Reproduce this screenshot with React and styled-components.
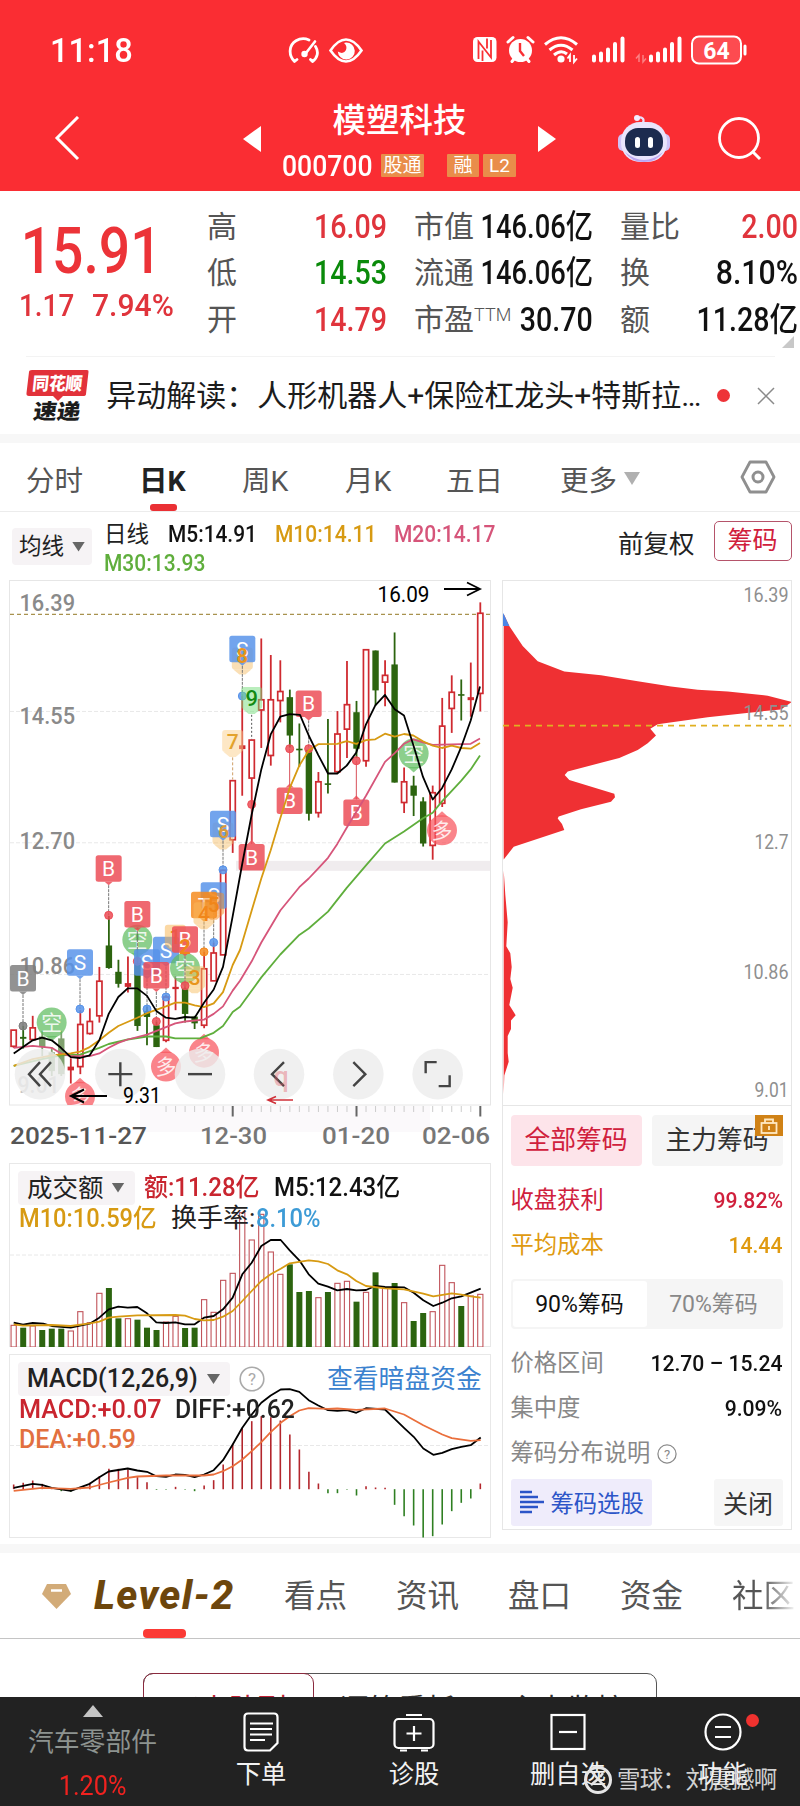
import React from "react";
import styled, {createGlobalStyle} from "styled-components";

const RED = "#c9252f";
const GREEN = "#2c640f";
const ORANGE = "#d79a12";
const PINK = "#d6557a";
const LIME = "#5fae3c";

/* ---------- chart data: [up, top, bottom, high, low] ---------- */

const candles = [
    [1, 1223, 1266, 1223, 1270], [0, 1241, 1246, 1212, 1272], [1, 1217, 1248, 1185, 1252],
    [0, 1240, 1268, 1225, 1292, 1], [0, 1282, 1332, 1270, 1345, 1], [0, 1245, 1340, 1225, 1345, 1],
    [1, 1320, 1330, 1298, 1365], [1, 1208, 1320, 1170, 1340], [1, 1200, 1232, 1165, 1235],
    [1, 1093, 1185, 1055, 1203], [0, 998, 1058, 920, 1060], [0, 1068, 1100, 1036, 1110],
    [1, 1098, 1108, 1027, 1123], [0, 1045, 1212, 950, 1225], [0, 1172, 1188, 1160, 1263],
    [0, 1210, 1268, 1200, 1268], [1, 1135, 1250, 1130, 1255], [1, 1108, 1114, 1080, 1170],
    [0, 1112, 1180, 1105, 1203], [0, 1187, 1205, 1185, 1220], [1, 1060, 1210, 1015, 1218],
    [1, 1018, 1092, 990, 1092], [1, 798, 1023, 798, 1023], [1, 560, 717, 560, 752],
    [1, 466, 476, 335, 600], [1, 452, 553, 452, 720], [1, 345, 372, 182, 473],
    [1, 345, 493, 226, 520], [1, 323, 347, 240, 405], [0, 338, 440, 318, 472],
    [0, 475, 478, 408, 523], [0, 478, 648, 478, 666], [1, 563, 645, 537, 658],
    [0, 567, 571, 396, 594], [1, 436, 536, 375, 540], [1, 358, 423, 242, 500],
    [0, 378, 475, 348, 500], [1, 212, 507, 212, 523], [0, 214, 320, 214, 360],
    [1, 280, 298, 240, 362], [0, 251, 565, 166, 565], [1, 563, 618, 525, 646],
    [0, 573, 600, 547, 654], [0, 615, 727, 604, 735], [1, 592, 732, 573, 770],
    [1, 415, 620, 340, 630], [1, 325, 368, 280, 433], [0, 330, 334, 291, 400],
    [1, 338, 346, 246, 390], [1, 115, 328, 86, 376]
];

const ma5 = "41,1285 98,1250 126,1243 155,1250 183,1270 212,1295 240,1297 269,1290 298,1250 326,1180 355,1135 383,1112 412,1112 441,1132 469,1172 498,1190 526,1193 555,1188 584,1190 612,1150 641,1115 669,1055 698,920 727,780 755,650 784,530 812,437 841,390 869,383 900,385 926,440 955,492 984,541 1012,541 1040,520 1069,485 1098,410 1126,360 1155,332 1184,370 1212,387 1240,465 1269,550 1298,610 1326,580 1355,530 1384,470 1412,400 1440,310";
const ma10 = "41,1318 98,1300 155,1290 212,1285 240,1280 269,1268 298,1250 326,1230 355,1212 412,1190 441,1178 498,1160 526,1150 555,1150 584,1157 612,1162 641,1152 669,1122 698,1050 720,1010 755,905 784,820 812,745 841,660 869,580 898,520 926,480 955,463 1012,462 1040,455 1069,462 1098,452 1126,450 1155,435 1184,443 1212,436 1240,440 1269,455 1298,467 1326,473 1355,467 1384,473 1412,475 1440,460";
const ma20 = "41,1270 98,1265 155,1270 183,1285 212,1292 269,1292 298,1285 326,1270 355,1257 383,1248 441,1235 498,1215 526,1205 555,1200 612,1195 641,1180 669,1160 698,1118 720,1092 755,1040 784,990 841,905 898,843 926,820 955,793 984,765 1012,728 1040,685 1098,600 1155,510 1184,487 1212,462 1240,450 1269,458 1298,465 1384,463 1412,462 1440,448";
const ma30 = "41,1318 126,1300 183,1290 240,1288 298,1270 326,1260 383,1248 441,1240 498,1240 526,1245 600,1245 641,1230 669,1212 698,1175 720,1161 784,1083 841,1022 898,970 926,953 984,908 1040,845 1098,785 1155,727 1212,695 1269,660 1298,645 1326,615 1384,560 1412,530 1440,493";

const volumes = [
    [1, 523], [0, 530], [1, 525], [0, 537], [0, 533], [0, 533], [1, 540], [1, 482], [1, 515], [1, 427],
    [0, 411], [0, 502], [1, 503], [0, 506], [0, 530], [0, 537], [1, 513], [1, 496], [0, 531], [0, 530],
    [1, 446], [1, 484], [1, 388], [1, 367], [1, 185], [1, 267], [1, 190], [1, 303], [1, 370], [0, 340],
    [0, 423], [0, 420], [1, 440], [0, 423], [1, 397], [1, 391], [0, 452], [1, 424], [0, 364], [1, 412],
    [0, 396], [1, 455], [0, 510], [0, 486], [1, 482], [1, 343], [1, 395], [0, 465], [1, 435], [1, 430]
];
const vol5 = "41,515 69,521 98,516 130,518 155,525 212,530 269,518 298,500 326,475 355,467 383,470 412,468 441,487 469,514 498,516 526,514 555,520 584,520 612,500 641,495 669,475 698,440 727,370 755,335 784,285 812,267 842,267 869,298 898,328 926,370 955,398 984,407 1012,418 1041,414 1069,418 1098,417 1126,405 1155,408 1212,409 1241,425 1270,448 1300,465 1327,455 1355,442 1384,436 1412,425 1442,413";
const vol10 = "41,520 69,524 155,522 212,525 269,517 298,512 326,500 355,497 412,493 526,492 555,494 584,504 612,508 641,507 669,497 698,480 727,450 755,420 784,390 812,370 842,353 869,337 926,328 955,331 984,339 1012,358 1041,370 1069,390 1098,405 1155,412 1212,415 1270,428 1300,436 1355,427 1384,431 1412,436 1442,440";

const macdBars = [
    1005, 1000, 993, 1003, 1014, 1025, 1027, 1012, 1000, 980, 958, 958, 960, 983, 998, 1021, 1021, 1012, 1021, 1025,
    1008, 992, 945, 883, 835, 815, 800, 803, 813, 855, 900, 967, 1002, 1031, 1031, 1021, 1038, 1010, 1014, 1015,
    1066, 1100, 1128, 1164, 1160, 1125, 1085, 1060, 1047, 1002
];
const diffLine = "41,1015 98,1003 126,1006 155,1015 212,1024 269,1003 298,983 326,966 383,957 412,963 441,967 469,980 498,982 526,975 555,976 584,983 612,975 641,962 669,932 698,885 727,835 755,795 784,760 812,738 842,720 869,719 898,727 926,752 955,768 984,782 1012,784 1041,782 1069,790 1098,776 1155,780 1184,808 1212,835 1241,862 1270,897 1300,916 1327,910 1355,899 1384,892 1412,887 1442,864";
const deaLine = "41,1024 126,1015 212,1018 269,1014 326,999 383,985 412,981 498,978 612,978 641,975 669,965 698,950 727,930 755,905 784,878 812,848 842,820 869,800 898,783 926,776 984,778 1012,777 1069,781 1155,777 1212,795 1270,827 1327,855 1355,866 1412,874 1442,872";

const chipShape = "38,125 55,160 95,218 140,262 220,292 330,303 440,320 540,335 620,345 710,350 830,362 902,380 870,402 760,413 650,425 500,445 478,458 495,478 470,500 440,520 385,543 230,582 221,592 235,607 370,647 372,657 360,670 270,692 203,713 200,719 213,735 220,752 68,801 38,838 38,870 43,940 50,1020 46,1090 58,1110 62,1150 58,1185 65,1210 55,1260 74,1290 60,1305 60,1330 50,1350 50,1400 53,1425 40,1465 38,1520";

const quotes = [
    ["高", "16.09", "#e0343c"], ["市值", "146.06亿", "#111"], ["量比", "2.00", "#e0343c"],
    ["低", "14.53", "#0a8a0a"], ["流通", "146.06亿", "#111"], ["换", "8.10%", "#111"],
    ["开", "14.79", "#e0343c"], ["市盈", "30.70", "#111", "TTM"], ["额", "11.28亿", "#111"]
];

/* ---------- chart helpers ---------- */

const K = 2.658;
const kx = v => v / 3;
const ky = v => v / K;
const barX = i => (41 + 28.57 * i) / 3;
const scale = (str, fx, fy) => str
    .split(" ")
    .map(p => {
        const [x, y] = p.split(",");
        return fx(+x).toFixed(1) + "," + fy(+y).toFixed(1);
    })
    .join(" ");

const Curve = ({points, color, y = ky, w = 1.8}) => (
    <polyline points={scale(points, kx, y)} fill="none" stroke={color} strokeWidth={w} strokeLinejoin="round"/>
);

const Label = ({x, y, w, size = 24, color = "#8a8a8a", anchor = "start", weight = 400, children}) => (
    <text x={x} y={y} fontSize={size} fill={color} textAnchor={anchor} fontWeight={weight} textLength={w} lengthAdjust="spacingAndGlyphs">{children}</text>
);

// square B / S / T flag, tail points to the candle it belongs to
const Flag = ({x, y, color, text, up, dot}) => {
    const cx = kx(x);
    const top = ky(y);
    const mid = top + 13.5;
    return (
        <g>
            {dot && <line x1={cx} x2={cx} y1={up ? top : top + 30} y2={ky(dot)} stroke={up ? "#d8505a" : "#777"} strokeWidth="1" strokeDasharray={up ? "" : "3 1"}/>}
            {dot && <circle cx={cx} cy={ky(dot)} r="4" fill={color} fillOpacity=".85" stroke={color}/>}
            <rect x={cx - 13} y={top} width="26" height="26.5" rx="2.5" fill={color} fillOpacity=".84"/>
            <path d={up ? `M${cx - 4} ${top}L${cx} ${top - 4}L${cx + 4} ${top}Z` : `M${cx - 4} ${top + 26.5}L${cx} ${top + 30}L${cx + 4} ${top + 26.5}Z`} fill={color} fillOpacity=".84"/>
            <text x={cx} y={mid + 7.5} fontSize="21" fill="#fff" textAnchor="middle">{text}</text>
        </g>
    );
};

const Bubble = ({x, y, color, text, up}) => {
    const cx = kx(x);
    const cy = ky(y);
    const d = up ? -1 : 1;
    return (
        <g>
            <circle cx={cx} cy={cy} r="15" fill={color} fillOpacity=".72"/>
            <path d={`M${cx - 6} ${cy + d * 13.5}L${cx} ${cy + d * 19}L${cx + 6} ${cy + d * 13.5}Z`} fill={color} fillOpacity=".72"/>
            <text x={cx} y={cy + 7.5} fontSize="21" fill="#fff" fillOpacity=".85" textAnchor="middle">{text}</text>
        </g>
    );
};

const Count = ({x, y, text, bg, color, size = 21}) => (
    <g>
        <rect x={kx(x) - 10.5} y={ky(y) - 12} width="21" height="22" rx="3" fill={bg} fillOpacity=".5"/>
        <path d={`M${kx(x) - 9} ${ky(y) + 10}h18l-6 5h-6z`} fill={bg} fillOpacity=".5"/>
        <text x={kx(x)} y={ky(y) + 7} fontSize={size} fontWeight="500" fill={color} textAnchor="middle">{text}</text>
    </g>
);

const RoundButton = ({x, d}) => (
    <g>
        <circle cx={kx(x)} cy={ky(1340)} r="25.3" fill="#ededed" fillOpacity=".82"/>
        <path transform={`translate(${kx(x)} ${ky(1340)})`} d={d} fill="none" stroke="#444" strokeWidth="2.4"/>
    </g>
);

const BLUE = "#5793ea";
const ROSE = "#ec4b55";
const LEAF = "#5fbd5f";

const KChart = () => (
    <Drawing width="482" height="575" viewBox="9 10 482 575">
        <defs>
            <clipPath id="kbox"><rect x="9" y="10" width="482" height="525"/></clipPath>
        </defs>
        <rect x="140" y="536" width="290" height="26" fill="#fbf9fb"/>
        <rect x="9.5" y="10.5" width="481" height="524.5" fill="none" stroke="#e6e6e6"/>
        {[376, 725, 1075].map(y => (
            <line key={y} x1="10" x2="490" y1={ky(y)} y2={ky(y)} stroke="#e8e8e8" strokeDasharray="4 2"/>
        ))}
        <rect x="236" y={ky(773)} width="254" height="10" fill="#f0ecee"/>
        <line x1="10" x2="490" y1={ky(118)} y2={ky(118)} stroke="#a8924e" strokeWidth="1.2" strokeDasharray="4 3"/>

        <Label x="19.5" y="40.5" w="55.5" weight={500}>16.39</Label>
        <Label x="19.5" y="153.5" w="55.5" weight={500}>14.55</Label>
        <Label x="19.5" y="278.5" w="55.5" weight={500}>12.70</Label>
        <Label x="19.5" y="403.5" w="55.5" weight={500}>10.86</Label>
        <Label x="17.5" y="523" w="42" color="#c2c2c2" weight={500}>9.01</Label>

        <g clipPath="url(#kbox)">
            {candles.map(([up, top, bottom, high, low, faded], i) => {
                const x = barX(i);
                const c = up ? "#cf2a30" : GREEN;
                const h = Math.max(ky(bottom - top), 1.6);
                const solid = !up || h < 4.5;
                return (
                    <g key={i} opacity={faded ? 0.6 : 1}>
                        <line x1={x} x2={x} y1={ky(high)} y2={ky(low)} stroke={c} strokeWidth="1.8"/>
                        <rect x={x - (solid ? 3.2 : 2.6)} y={ky(top)} width={solid ? 6.4 : 5.2} height={h} fill={solid ? c : "#fff"} stroke={solid ? "none" : c} strokeWidth="1.7"/>
                    </g>
                );
            })}

            <Flag x={69} y={1050} color="#7d7d7d" text="B" dot={1212}/>
            <Bubble x={155} y={1203} color={LEAF} text="空"/>
            <Flag x={240} y={1008} color={BLUE} text="S" dot={1167}/>
            <Flag x={326} y={758} color={ROSE} text="B" dot={918}/>
            <Bubble x={412} y={983} color={LEAF} text="空"/>
            <Flag x={412} y={880} color={ROSE} text="B" dot={1040}/>
            <Flag x={441} y={1008} color={BLUE} text="S" dot={1167}/>
            <Flag x={498} y={975} color={BLUE} text="S" dot={1135}/>
            <Flag x={469} y={1042} color={ROSE} text="B" dot={1200}/>
            <Bubble x={555} y={1058} color={LEAF} text="空"/>
            <Count x={584} y={1085} text="3" bg="#f7c063" color="#e8951c"/>
            <Count x={526} y={975} text="1" bg="#f7b14a" color="#e8951c"/>
            <Flag x={555} y={947} color={ROSE} text="B" dot={1105}/>
            <Label x={kx(555)} y={ky(1020)} anchor="middle" size={21} color="#f0861a" weight={700}>2</Label>
            <Flag x={641} y={830} color={BLUE} text="S" dot={990}/>
            <Flag x={612} y={855} color="#f58a1d" text="T" dot={1015}/>
            <Count x={612} y={915} text="4" bg="#f9b95c" color="#f0861a"/>
            <Count x={641} y={890} text="5" bg="#f58a1d" color="#f0861a"/>
            <Count x={669} y={703} text="" bg="#f6bf6b" color="#e8951c"/>
            <Flag x={669} y={640} color={BLUE} text="S" dot={797}/>
            <Label x={kx(671)} y={ky(712)} anchor="middle" size={19} color="#d99a3c" weight={700}>6</Label>
            <line x1={kx(698)} x2={kx(698)} y1={ky(498)} y2={ky(557)} stroke="#cf9f66" strokeDasharray="3 2"/>
            <Count x={698} y={457} text="7" bg="#fbd08c" color="#e3a22b"/>
            <Count x={727} y={238} text="" bg="#f6bf6b" color="#e8951c"/>
            <Flag x={727} y={175} color={BLUE} text="S" dot={335}/>
            <Label x={kx(727)} y={ky(248)} anchor="middle" size={20} color="#e8951c" weight={700}>8</Label>
            <line x1={kx(755)} x2={kx(755)} y1={ky(385)} y2={ky(450)} stroke="#555" strokeDasharray="2 2"/>
            <Count x={755} y={343} text="9" bg="#76dd7c" color="#128a12" size={22}/>
            <Flag x={755} y={728} color={ROSE} text="B" up dot={623}/>
            <Flag x={926} y={320} color={ROSE} text="B" dot={475}/>
            <Flag x={869} y={578} color={ROSE} text="B" up dot={475}/>
            <Flag x={1069} y={610} color={ROSE} text="B" up dot={507}/>
            <Bubble x={1241} y={488} color={LEAF} text="空"/>
            <Bubble x={1326} y={692} color="#f8555d" text="多" up/>
            <Bubble x={498} y={1320} color="#f8555d" text="多" up/>
            <Bubble x={612} y={1283} color="#f8555d" text="多" up/>
            <Bubble x={240} y={1400} color="#f8555d" text="多" up/>

            <Curve points={ma30} color={LIME}/>
            <Curve points={ma20} color={PINK}/>
            <Curve points={ma10} color={ORANGE}/>
            <Curve points={ma5} color="#000"/>
        </g>

        <Label x="377.5" y="32" w="52" size={22} color="#000">16.09</Label>
        <path d="M444 19H480M467 12.5L480 19L467 25.5" fill="none" stroke="#000" strokeWidth="1.8"/>

        <RoundButton x={120} d="M0 -12L-11 0L0 12M11 -12L0 0L11 12"/>
        <RoundButton x={361} d="M-12 0H12M0 -12V12"/>
        <RoundButton x={600} d="M-12 0H12"/>
        <RoundButton x={837} d="M5 -12L-7 0L5 12"/>
        <RoundButton x={1075} d="M-5 -12L7 0L-5 12"/>
        <RoundButton x={1313} d="M-12 -1V-12H-1M12 1V12H1"/>

        <Label x="273.5" y="516" size={27} color="rgba(226,90,100,.4)" weight={500}>q</Label>
        <path d="M293 530H268M276 526.5L268 530L276 533.5" fill="none" stroke="#cf3038" strokeWidth="1.6"/>
        <Label x="123" y="533" w="38" size={22} color="#000">9.31</Label>
        <path d="M107 526H71M84 519.5L71 526L84 532.5" fill="none" stroke="#000" strokeWidth="2"/>

        {Array.from({length: 34}, (_, n) => n + 16).map(i => {
            const big = i === 23 || i === 36 || i === 49;
            return <line key={i} x1={barX(i)} x2={barX(i)} y1="536" y2={big ? 546.5 : 542} stroke={big ? "#666" : "#ccc"} strokeWidth={big ? 2 : 1}/>;
        })}
        <Label x="10" y="573.5" w="137" color="#555" weight={500}>2025-11-27</Label>
        <Label x="200" y="573.5" w="67" color="#777" weight={500}>12-30</Label>
        <Label x="322" y="573.5" w="68" color="#777" weight={500}>01-20</Label>
        <Label x="422" y="573.5" w="68" color="#777" weight={500}>02-06</Label>
    </Drawing>
);

const chipY = v => v / 2.904 - 10;
const chipX = v => (v - 36) / 3;

const ChipChart = () => (
    <Drawing width="288" height="524" viewBox="0 0 288 524">
        <polygon points={scale(chipShape, chipX, chipY)} fill="#ef3033"/>
        <polygon points={scale("36,122 38,125 55,160 36,160", chipX, chipY)} fill="#4b86e6"/>
        <line x1="0" x2="288" y1={chipY(449)} y2={chipY(449)} stroke="#e0b020" strokeWidth="1.8" strokeDasharray="6 5"/>
        {[["16.39", 90, 45], ["14.55", 432, 45], ["12.7", 807, 34], ["10.86", 1185, 45], ["9.01", 1527, 34]].map(([t, y, w]) => (
            <Label key={t} x="285.5" y={chipY(y)} w={w} size={19.5} anchor="end" color="#8f8f8f">{t}</Label>
        ))}
    </Drawing>
);

const vy = v => v / 3 - 12;

const VolumeChart = () => (
    <Drawing width="482" height="184" viewBox="9 0 482 184">
        <line x1="10" x2="490" y1={vy(312)} y2={vy(312)} stroke="#e8e8e8" strokeDasharray="4 2"/>
        {volumes.map(([up, top], i) => (
            <rect
                key={i}
                x={barX(i) - (up ? 2.6 : 3)}
                y={vy(top)}
                width={up ? 5.2 : 6}
                height={vy(588) - vy(top)}
                fill={up ? "#fff" : GREEN}
                stroke={up ? "#c0535a" : "none"}
                strokeWidth="1.1"/>
        ))}
        <Curve points={vol5} color="#000" y={vy}/>
        <Curve points={vol10} color={ORANGE} y={vy}/>
    </Drawing>
);

const my = v => v / 3 - 204.5;

const MacdChart = () => (
    <Drawing width="482" height="184" viewBox="9 0 482 184">
        <line x1="10" x2="490" y1={my(888)} y2={my(888)} stroke="#e8e8e8" strokeDasharray="4 2"/>
        {macdBars.map((v, i) => (
            <line key={i} x1={barX(i)} x2={barX(i)} y1={my(1019)} y2={my(v)} stroke={v < 1019 ? "#b3262c" : "#2f7f22"} strokeWidth="1.6"/>
        ))}
        <Curve points={diffLine} color="#000" y={my}/>
        <Curve points={deaLine} color="#ea6f3c" y={my}/>
    </Drawing>
);

/* ---------- icons ---------- */

const StatusIcons = () => (
    <svg width="276" height="32" viewBox="471 34 276 32" fill="none" stroke="#fff">
        <rect x="473" y="37" width="23.5" height="25" rx="4.5" fill="#fff" stroke="none"/>
        <path d="M478.5 59V41.5L491 57.5V40M482.500 61V50.500M487 38.500V48.500" stroke="#f92f34" strokeWidth="1.800"/>
        <circle cx="520.5" cy="50.5" r="11.5" fill="#fff" stroke="none"/>
        <path d="M508 42L513 37.5M533 42L528 37.5M512 61.5L514 59M529 61.5L527 59" strokeWidth="3" strokeLinecap="round"/>
        <path d="M520 43V51L524 56" stroke="#f92f34" strokeWidth="2.4"/>
        <path d="M545 44.5Q561 31 577 44.5M549.5 50Q561 40.5 572.5 50M554 55Q561 49 567 54" strokeWidth="3"/>
        <circle cx="561" cy="59" r="3.6" fill="#fff" stroke="none"/>
        <path d="M570 62V55L567.5 58.5M574 55V62L577 58.5" strokeWidth="1.8"/>
        <path d="M594 56.5V60.5M601 53.5V60.5M608 49.5V60.5M615 44V60.5M622.5 38.5V60.5" strokeWidth="4" strokeLinecap="round"/>
        <path d="M639 62V55L636 58.5M643 55V62L646 58.5" strokeWidth="1.5" strokeOpacity=".4"/>
        <path d="M651 56.5V60.5M658 53.5V60.5M665 49.5V60.5M672 44V60.5M679.5 38.5V60.5" strokeWidth="4" strokeLinecap="round"/>
        <rect x="692" y="36.5" width="49" height="27" rx="7" strokeWidth="2" fill="#ff6a6d" fillOpacity=".5"/>
        <path d="M745 46V54" strokeWidth="3" strokeLinecap="round"/>
        <text x="716.5" y="58.5" fontSize="23" fontWeight="700" fill="#fff" stroke="none" textAnchor="middle">64</text>
    </svg>
);

const CenterIcons = () => (
    <svg width="76" height="28" viewBox="288 35 76 28" fill="none" stroke="#fff" strokeLinecap="round">
        <path d="M294.5 60.5C288 54 289 44 296 39.8C300 37.4 305 37.2 309 39M315.5 45.5C319 51 317.5 57 312.5 60.5M294.5 60.5L297 58.5M312.5 60.5L310.5 58.5" strokeWidth="2.8"/>
        <path d="M315 40.5L306 52" strokeWidth="2.6"/>
        <circle cx="304.5" cy="53" r="3.2" fill="#fff" stroke="none"/>
        <path d="M330.5 49.5Q338 38.5 346 38.5Q354 38.5 361.5 49.5Q354 60.5 346 60.5Q338 60.5 330.5 49.5Z" strokeWidth="2.6"/>
        <path d="M346 41.5A8.5 8.5 0 1 1 337.8 50.5Q343.5 54 346 49Q347.5 45 344 42Z" fill="#fff" stroke="none"/>
    </svg>
);

const Robot = () => (
    <svg width="54" height="50" viewBox="0 0 54 50">
        <path d="M26 9C28 4 24 2.5 20.500 4" fill="none" stroke="#e9defa" strokeWidth="2.200"/>
        <circle cx="20" cy="4" r="3" fill="#f3ecff"/>
        <rect x="1" y="20" width="10" height="17" rx="5" fill="#cfc2f7"/>
        <rect x="43" y="20" width="10" height="17" rx="5" fill="#cfc2f7"/>
        <rect x="4" y="8" width="46" height="40" rx="19" fill="#e9e4fc"/>
        <path d="M8 38Q27 54 46 38Q40 48 27 48Q14 48 8 38Z" fill="#bba6f2"/>
        <rect x="8" y="14" width="38" height="28" rx="13" fill="#1c2b4f"/>
        <rect x="18" y="23" width="5" height="11" rx="2.5" fill="#fff"/>
        <rect x="31" y="23" width="5" height="11" rx="2.5" fill="#fff"/>
    </svg>
);

const Help = ({size, color}) => (
    <svg width={size} height={size} viewBox="0 0 26 26">
        <circle cx="13" cy="13" r="11.8" fill="none" stroke={color} strokeWidth="1.6"/>
        <text x="13" y="19" fontSize="17" fill={color} textAnchor="middle">?</text>
    </svg>
);

/* ---------- page ---------- */

const App = () => {
    return (
        <Page>
            <GlobalStyle/>
            <Header>
                <StatusBar>
                    <Fig $size={34} $k={0.96} $w={238} $weight={500}>11:18</Fig>
                    <CenterIcons/>
                    <StatusIcons/>
                </StatusBar>
                <NavBar>
                    <NavIcon $left={54}>
                        <svg width="26" height="46" viewBox="0 0 26 46"><path d="M24 1L3 22L24 43" fill="none" stroke="#fff" strokeWidth="3"/></svg>
                    </NavIcon>
                    <NavIcon $left={163}>
                        <svg width="18" height="26" viewBox="0 0 18 26"><path d="M0 13L18 0V26Z" fill="#fff"/></svg>
                    </NavIcon>
                    <StockTitle>
                        <h1>模塑科技</h1>
                        <div>
                            <Fig $size={30} $k={0.885} $w={99} $weight={500}>000700</Fig>
                            <Tag $w={43}>股通</Tag>
                            <Tag $w={32} $left={23}>融</Tag>
                            <Tag $w={33} $left={4}>L2</Tag>
                        </div>
                    </StockTitle>
                    <NavIcon>
                        <svg width="18" height="26" viewBox="0 0 18 26"><path d="M18 13L0 0V26Z" fill="#fff"/></svg>
                    </NavIcon>
                    <NavIcon $left={61}><Robot/></NavIcon>
                    <NavIcon $left={46}>
                        <svg width="46" height="46" viewBox="0 0 46 46"><circle cx="22" cy="22" r="19.5" fill="none" stroke="#fff" strokeWidth="2.8"/><path d="M35.5 35.5L43 43" stroke="#fff" strokeWidth="3"/></svg>
                    </NavIcon>
                </NavBar>
            </Header>

            <Quote>
                <PriceBox>
                    <Price>15.91</Price>
                    <Change>
                        <Fig $size={32} $k={0.87} $w={73} $weight={500}>1.17</Fig>
                        <Fig $size={32} $k={0.94} $weight={500}>7.94%</Fig>
                    </Change>
                </PriceBox>
                <QuoteGrid>
                    {quotes.map(([name, value, color, sup]) => (
                        <QuoteCell key={name}>
                            <span>{name}{sup && <sup>{sup}</sup>}</span>
                            <QuoteValue $color={color} $k={value.length > 6 ? 0.84 : value.endsWith("%") ? 0.93 : 0.88}>{value}</QuoteValue>
                        </QuoteCell>
                    ))}
                </QuoteGrid>
                <Corner/>
            </Quote>

            <News>
                <NewsLogo>
                    <svg width="64" height="53" viewBox="0 0 64 53">
                        <path d="M6 1H61Q63 1 62.5 3L60 25Q60 27 57 27H37L32 32L27 27H3Q0 27 0.5 24L3 3Q3 1 6 1Z" fill="#e2323a"/>
                        <text x="31" y="21" fontSize="18" fontWeight="900" fill="#fff" textAnchor="middle" textLength="50" lengthAdjust="spacingAndGlyphs" transform="skewX(-6)" dx="2">同花顺</text>
                        <text x="31" y="50" fontSize="21" fontWeight="900" fill="#1c1c1c" textAnchor="middle" textLength="47" lengthAdjust="spacingAndGlyphs" transform="skewX(-8)" dx="6">速递</text>
                    </svg>
                </NewsLogo>
                <p>异动解读：<span>人形机器人+保险杠龙头+特斯拉…</span></p>
                <RedDot/>
                <svg width="18" height="18" viewBox="0 0 18 18"><path d="M1 1L17 17M17 1L1 17" stroke="#8a8a8a" strokeWidth="1.5"/></svg>
            </News>
            <Band/>

            <PeriodTabs>
                <Period>分时</Period>
                <Period $on>日K</Period>
                <Period>周K</Period>
                <Period>月K</Period>
                <Period>五日</Period>
                <Period>更多<Arrow $w={16} $h={13} $color="#b0b0b0" $left={7}/></Period>
                <svg width="36" height="34" viewBox="0 0 36 34" fill="none" stroke="#8f8f8f">
                    <path d="M10 2H26L34 17L26 32H10L2 17Z" strokeWidth="2.8" strokeLinejoin="round"/>
                    <circle cx="18" cy="17" r="5" strokeWidth="3"/>
                </svg>
            </PeriodTabs>

            <Legend>
                <SelectBox $w={80} $h={37} $size={22.5}>均线<Arrow $w={13} $h={10} $color="#666" $left={8}/></SelectBox>
                <LegendText>
                    <Fig $size={22.5} $k={1} $w={64} $color="#222">日线</Fig>
                    <Fig $size={24} $k={0.87} $w={107} $color="#111" $weight={500}>M5:14.91</Fig>
                    <Fig $size={24} $k={0.875} $w={119} $color={ORANGE} $weight={500}>M10:14.11</Fig>
                    <Fig $size={24} $k={0.875} $w={110} $color={PINK} $weight={500}>M20:14.17</Fig>
                    <Fig $size={24} $k={0.875} $w={110} $color={LIME} $weight={500}>M30:13.93</Fig>
                </LegendText>
                <Adjust>前复权</Adjust>
                <ChipButton>筹码</ChipButton>
            </Legend>

            <Charts>
                <LeftColumn>
                    <KChart/>
                    <ChartBox>
                        <VolumeChart/>
                        <ChartText>
                            <div>
                                <SelectBox $w={117} $h={35} $size={25.5}>成交额<Arrow $w={13} $h={10} $color="#666" $left={8}/></SelectBox>
                                <Fig $size={25} $k={0.96} $w={130} $color={RED} $weight={500}>额:11.28亿</Fig>
                                <Fig $size={25} $k={0.96} $color="#111" $weight={500}>M5:12.43亿</Fig>
                            </div>
                            <p>
                                <Fig $size={25} $k={0.945} $w={152} $color={ORANGE} $weight={500}>M10:10.59亿</Fig>
                                <Fig $size={26} $k={1} $w={85} $color="#222">换手率:</Fig>
                                <Fig $size={25} $k={0.95} $color="#3d9bd6" $weight={500}>8.10%</Fig>
                            </p>
                        </ChartText>
                    </ChartBox>
                    <ChartBox>
                        <MacdChart/>
                        <ChartText>
                            <div>
                                <SelectBox $w={212} $h={35} $size={25}><Fig $size={25} $k={1} $w={172} $color="#222" $weight={500}>MACD(12,26,9)</Fig><Arrow $w={13} $h={10} $color="#666" $left={8}/></SelectBox>
                                <Help size={26} color="#aaa"/>
                                <DarkLink>查看暗盘资金</DarkLink>
                            </div>
                            <p>
                                <Fig $size={25} $k={1.01} $w={156} $color={RED} $weight={500}>MACD:+0.07</Fig>
                                <Fig $size={25} $k={0.99} $color="#222" $weight={500}>DIFF:+0.62</Fig>
                            </p>
                            <p><Fig $size={25} $k={1} $color="#e2703f" $weight={500}>DEA:+0.59</Fig></p>
                        </ChartText>
                    </ChartBox>
                </LeftColumn>

                <ChipPanel>
                    <ChipChart/>
                    <ChipInfo>
                        <ChipTabs>
                            <ChipTab $on>全部筹码</ChipTab>
                            <ChipTab>
                                主力筹码
                                <Lock>
                                    <svg width="18" height="18" viewBox="0 0 18 18" fill="none" stroke="#ffe9c2" strokeWidth="1.8"><rect x="1.5" y="6" width="15" height="10"/><path d="M5 6V2.5H13V6M9 9V13"/></svg>
                                </Lock>
                            </ChipTab>
                        </ChipTabs>
                        <InfoRow $color="#d0203c"><span>收盘获利</span><b>99.82%</b></InfoRow>
                        <InfoRow $color="#e09a10"><span>平均成本</span><b>14.44</b></InfoRow>
                        <Segment>
                            <SegmentItem $on>90%筹码</SegmentItem>
                            <SegmentItem>70%筹码</SegmentItem>
                        </Segment>
                        <InfoRow $color="#111"><i>价格区间</i><b>12.70 – 15.24</b></InfoRow>
                        <InfoRow $color="#111"><i>集中度</i><b>9.09%</b></InfoRow>
                        <InfoRow><i>筹码分布说明<Help size={20} color="#8a8a8a"/></i></InfoRow>
                        <ChipActions>
                            <PickButton>
                                <svg width="24" height="24" viewBox="0 0 24 24" stroke="#2c55c8" strokeWidth="2.6"><path d="M0 2H12M0 7H18M0 12H24M0 17H18M0 22H12"/></svg>
                                筹码选股
                            </PickButton>
                            <CloseButton>关闭</CloseButton>
                        </ChipActions>
                    </ChipInfo>
                </ChipPanel>
            </Charts>
            <Band/>

            <SectionTabs>
                <svg width="29" height="25" viewBox="0 0 29 25">
                    <path d="M5 0H24L29 10L14.5 25L0 10Z" fill="#d2ab78"/>
                    <path d="M9 6.5H20" stroke="#fff" strokeWidth="2.5"/>
                </svg>
                <Level>Level-2</Level>
                <Section>看点</Section>
                <Section>资讯</Section>
                <Section>盘口</Section>
                <Section>资金</Section>
                <Section $fade>社区</Section>
            </SectionTabs>

            <SubArea>
                <SubTabs>
                    <SubTab $w={171} $on>买卖队列</SubTab>
                    <SubTab $w={172}>逐笔委托</SubTab>
                    <SubTab $w={171}>主力监控</SubTab>
                </SubTabs>
            </SubArea>

            <BottomBar>
                <Industry>
                    <svg width="20" height="12" viewBox="0 0 20 12"><path d="M10 0L20 12H0Z" fill="#c4c4c4"/></svg>
                    <span>汽车零部件</span>
                    <strong>1.20%</strong>
                </Industry>
                <Action>
                    <svg width="36" height="40" viewBox="0 0 36 40" fill="none" stroke="#fff" strokeWidth="2.2"><path d="M5 1.5H31Q34.5 1.5 34.5 5V31L27 38.5H5Q1.5 38.5 1.5 35V5Q1.5 1.5 5 1.5ZM7 11.5H30M7 17H29M7 22.5H29M7 28H22"/></svg>
                    下单
                </Action>
                <Action>
                    <svg width="42" height="40" viewBox="0 0 42 40" fill="none" stroke="#fff" strokeWidth="2.2"><rect x="1.5" y="7" width="39" height="29" rx="4"/><path d="M13 3H29M21 14V29M13.5 21.5H28.5M7 38.5H14M28 38.5H35"/></svg>
                    诊股
                </Action>
                <Action>
                    <svg width="36" height="40" viewBox="0 0 36 40" fill="none" stroke="#fff" strokeWidth="2.2"><rect x="1.5" y="3" width="33" height="34"/><path d="M9 20H27"/></svg>
                    删自选
                </Action>
                <Action>
                    <svg width="38" height="40" viewBox="0 0 38 40" fill="none" stroke="#fff" strokeWidth="2.2"><circle cx="19" cy="20" r="17.5"/><path d="M11 15H27M11 25H27"/></svg>
                    功能
                    <NewDot/>
                </Action>
                <Watermark>
                    <svg width="30" height="30" viewBox="0 0 30 30" fill="none" stroke="#e6e6e6" strokeWidth="3"><circle cx="15" cy="15" r="12.5"/><path d="M9 7L15 14L8 20M15 14L23 23M20 8L17 12" strokeWidth="2.5"/></svg>
                    雪球：刘震撼啊
                </Watermark>
            </BottomBar>
        </Page>
    )
}

const GlobalStyle = createGlobalStyle `
*{box-sizing: border-box;}
body{
    margin: 0;
    background: #fff;
    font-family: Roboto, "Noto Sans CJK SC", sans-serif;
}
h1,p{margin: 0;}
svg{flex: none; display: block;}
`
const Page = styled.div `
width: 800px;
height: 1806px;
overflow: hidden;
color: #111;
`
const Drawing = styled.svg `
grid-area: 1 / 1;
font-family: Roboto, "Noto Sans CJK SC", sans-serif;
`
// condensed figure: $w is the room it takes in the row
const Fig = styled.span `
display: inline-block;
flex: none;
width: ${p => p.$w ? p.$w + "px" : "auto"};
white-space: nowrap;
font-size: ${p => p.$size}px;
font-weight: ${p => p.$weight || 400};
color: ${p => p.$color || "inherit"};
transform: scaleX(${p => p.$k});
transform-origin: left center;
`
const Arrow = styled.i `
width: ${p => p.$w}px;
height: ${p => p.$h}px;
margin-left: ${p => p.$left}px;
background: ${p => p.$color};
clip-path: polygon(0 0, 100% 0, 50% 100%);
`
const Header = styled.header `
height: 191px;
background: #fa2d33;
color: #fff;
`
const StatusBar = styled.div `
display: flex;
align-items: center;
height: 100px;
padding-left: 50px;
svg:last-child{margin-left: 107px;}
`
const NavBar = styled.div `
display: flex;
height: 91px;
`
const NavIcon = styled.div `
display: flex;
align-items: center;
height: 77px;
margin-left: ${p => p.$left || 0}px;
`
const StockTitle = styled.div `
width: 277px;
h1{
    line-height: 41px;
    font-size: 33.5px;
    font-weight: 500;
    text-align: center;
}
div{
    display: flex;
    align-items: center;
    height: 49px;
    padding-left: 21px;
}
`
const Tag = styled.span `
width: ${p => p.$w}px;
height: 23px;
margin-left: ${p => p.$left || 0}px;
line-height: 23px;
font-size: 19px;
text-align: center;
background: #e98d4a;
border-radius: 1px;
`
const Quote = styled.section `
position: relative;
display: flex;
height: 165px;
`
const PriceBox = styled.div `
flex: none;
width: 207px;
padding: 28px 0 0 19px;
color: #e0343c;
`
const Price = styled.div `
line-height: 64px;
padding-left: 2px;
font-size: 65px;
font-weight: 500;
color: #ec3338;
transform: scaleX(.85);
transform-origin: left center;
`
const Change = styled.div `
line-height: 44px;
`
const QuoteGrid = styled.div `
display: grid;
grid-template-columns: 180px 179px 178px;
grid-auto-rows: 46.5px;
column-gap: 27px;
padding-top: 12.5px;
`
const QuoteCell = styled.div `
display: flex;
line-height: 46px;
font-size: 30px;
color: #555;
white-space: nowrap;
span:first-child{flex: none;}
sup{
    font-size: 18px;
    font-weight: 300;
    line-height: 0;
    vertical-align: 9px;
}
`
const QuoteValue = styled.span `
display: flex;
flex: 1;
min-width: 0;
justify-content: flex-end;
font-size: 32.5px;
font-weight: 500;
color: ${p => p.$color};
transform: scaleX(${p => p.$k});
transform-origin: right center;
`
const Corner = styled.i `
position: absolute;
right: 6px;
bottom: 8px;
border: 6px solid;
border-color: transparent #c8c8c8 #c8c8c8 transparent;
`
const News = styled.section `
display: flex;
align-items: center;
height: 78px;
margin: 0 25px 0 26px;
border-top: 1px solid #f3f3f3;
p{
    width: 617px;
    margin-left: 15px;
    font-size: 30px;
    line-height: 40px;
    white-space: nowrap;
    color: #1c1c1c;
}
p span{margin-left: 1px;}
`
const NewsLogo = styled.div `
width: 66px;
`
const RedDot = styled.i `
width: 13px;
height: 13px;
margin-right: 27px;
flex: none;
border-radius: 50%;
background: #ee3338;
`
const Band = styled.div `
height: 9px;
background: #f7f7f7;
`
const PeriodTabs = styled.nav `
display: grid;
grid-template-columns: 113px 103px 103px 101px 114px 180px auto;
align-items: center;
height: 69px;
padding-left: 26px;
border-bottom: 1px solid #ececec;
`
const Period = styled.div `
position: relative;
display: flex;
align-items: center;
height: 68px;
padding-top: 3px;
font-size: 28.5px;
font-weight: ${p => p.$on ? 700 : 400};
color: ${p => p.$on ? "#222" : "#555"};
&::after{
    content: "";
    display: ${p => p.$on ? "block" : "none"};
    position: absolute;
    left: 11px;
    bottom: 0;
    width: 27px;
    height: 7px;
    border-radius: 3px;
    background: #ea3034;
}
`
const Legend = styled.section `
display: flex;
height: 68px;
padding-left: 12px;
`
const SelectBox = styled.div `
display: flex;
align-items: center;
flex: none;
width: ${p => p.$w}px;
height: ${p => p.$h}px;
padding-left: 7px;
font-size: ${p => p.$size}px;
line-height: 1;
color: #222;
background: #f6f3f5;
border-radius: 4px;
${Legend} &{margin-top: 16px;}
`
const LegendText = styled.div `
display: flex;
flex-wrap: wrap;
align-content: flex-start;
width: 460px;
margin-left: 12px;
padding-top: 8px;
line-height: 29px;
`
const Adjust = styled.div `
margin-left: 54px;
line-height: 64px;
font-size: 25.5px;
color: #222;
`
const ChipButton = styled.button `
width: 78px;
height: 40px;
margin: 9px 0 0 19px;
padding: 0;
border: 1px solid #b5536a;
border-radius: 5px;
background: #fff;
font-family: inherit;
font-size: 25px;
line-height: 38px;
color: #d0203c;
`
const Charts = styled.section `
display: grid;
grid-template-columns: 482px 290px;
column-gap: 10.5px;
height: 964px;
padding-left: 9px;
`
const LeftColumn = styled.div `
display: grid;
grid-template-rows: 575px 184px 184px;
row-gap: 7.5px;
height: 958px;
`
const ChartBox = styled.div `
display: grid;
grid-template-columns: 482px;
box-shadow: inset 0 0 0 1px #e8e8e8;
`
const ChartText = styled.div `
grid-area: 1 / 1;
padding-top: 8px;
div{
    display: flex;
    align-items: center;
    height: 34px;
    margin-left: 9px;
    line-height: 36px;
}
div > ${SelectBox}{margin: 0 9px 0 0; padding-left: 9px;}
div div{margin-left: 0;}
p{
    display: flex;
    height: 29.5px;
    margin-left: 10px;
    line-height: 27px;
}
`
const DarkLink = styled.a `
margin-left: 62px;
font-size: 25.8px;
white-space: nowrap;
color: #3b82cf;
`
const ChipPanel = styled.div `
height: 950px;
border: 1px solid #e6e6e6;
`
const ChipInfo = styled.div `
height: 425px;
padding: 9px 8px 0;
border-top: 1px solid #e6e6e6;
`
const ChipTabs = styled.div `
display: flex;
justify-content: space-between;
margin-bottom: 12px;
`
const ChipTab = styled.div `
position: relative;
width: 131px;
height: 51px;
border-radius: 4px;
line-height: 51px;
font-size: 25.8px;
text-align: center;
white-space: nowrap;
color: ${p => p.$on ? "#d0203c" : "#333"};
background: ${p => p.$on ? "#fde4ea" : "#f5f5f5"};
`
const Lock = styled.div `
position: absolute;
top: 0;
right: 0;
display: flex;
align-items: center;
justify-content: center;
width: 28px;
height: 21px;
background: #d08216;
`
const InfoRow = styled.div `
display: flex;
justify-content: space-between;
height: 45px;
line-height: 45px;
color: ${p => p.$color};
font-size: 23.3px;
i{
    display: flex;
    align-items: center;
    font-style: normal;
    color: #888;
}
i svg{margin-left: 7px;}
b{
    font-size: 22.5px;
    font-weight: 500;
    transform: scaleX(.94);
    transform-origin: right center;
}
`
const Segment = styled.div `
display: flex;
height: 50px;
margin: 11px 0 12px;
padding: 2px;
border-radius: 4px;
background: #f5f5f5;
`
const SegmentItem = styled.div `
width: 50%;
line-height: 47px;
font-size: 23px;
text-align: center;
border-radius: 3px;
color: ${p => p.$on ? "#111" : "#888"};
background: ${p => p.$on ? "#fff" : "none"};
`
const ChipActions = styled.div `
display: flex;
justify-content: space-between;
margin-top: 3px;
`
const PickButton = styled.button `
display: flex;
align-items: center;
gap: 7px;
width: 141px;
height: 47px;
padding: 0 0 2px 9px;
border: none;
border-radius: 3px;
background: #efecfb;
font-family: inherit;
font-size: 23.3px;
white-space: nowrap;
color: #2c55c8;
`
const CloseButton = styled.button `
width: 69px;
height: 47px;
padding: 0 0 2px;
border: none;
border-radius: 3px;
background: #f6f6f6;
font-family: inherit;
font-size: 25px;
color: #333;
`
const SectionTabs = styled.nav `
position: relative;
display: grid;
grid-template-columns: 52px 190px 112px 112px 112px 112px auto;
align-items: center;
height: 86px;
padding-left: 42px;
border-bottom: 1px solid #c4c4c4;
&::after{
    content: "";
    position: absolute;
    left: 143px;
    bottom: 0;
    width: 43px;
    height: 9px;
    border-radius: 4px;
    background: #fb3a35;
}
`
const Level = styled.div `
font-size: 40px;
font-weight: 800;
font-style: italic;
letter-spacing: 1.3px;
line-height: 86px;
color: #6d460c;
`
const Section = styled.div `
font-size: 31.5px;
line-height: 85px;
white-space: nowrap;
color: #555;
${p => p.$fade && "background: linear-gradient(90deg, #555 45%, #fff 95%); background-clip: text; color: transparent;"}
`
const SubArea = styled.div `
height: 58px;
padding: 34px 143px 0;
overflow: hidden;
`
const SubTabs = styled.div `
display: flex;
height: 66px;
border: 1px solid #555;
border-radius: 10px;
`
const SubTab = styled.div `
width: ${p => p.$w}px;
margin: -1px;
padding-top: 22px;
border: 1px solid ${p => p.$on ? "#8a2a3e" : "transparent"};
border-radius: 10px;
line-height: 29px;
font-size: 29px;
text-align: center;
color: ${p => p.$on ? "#c01f34" : "#333"};
`
const BottomBar = styled.footer `
position: relative;
display: grid;
grid-template-columns: 185px 152px 154px 154px 155px;
height: 109px;
background: #222;
`
const Industry = styled.div `
display: flex;
flex-direction: column;
align-items: center;
padding-top: 8px;
span{
    line-height: 50px;
    font-size: 25.8px;
    color: #8d9390;
}
strong{
    line-height: 37px;
    font-size: 28px;
    font-weight: 400;
    color: #f0221f;
    transform: scaleX(.9);
}
`
const Action = styled.div `
position: relative;
display: flex;
flex-direction: column;
align-items: center;
padding-top: 15px;
font-size: 25.3px;
line-height: 45px;
color: #f2f2f2;
`
const NewDot = styled.i `
position: absolute;
top: 17px;
right: 41px;
width: 13px;
height: 13px;
border-radius: 50%;
background: #f0322f;
`
const Watermark = styled.div `
position: absolute;
left: 583px;
top: 66px;
display: flex;
align-items: center;
gap: 4px;
font-size: 23.5px;
letter-spacing: -.7px;
line-height: 34px;
white-space: nowrap;
color: rgba(235,235,235,.88);
`

export default App;
